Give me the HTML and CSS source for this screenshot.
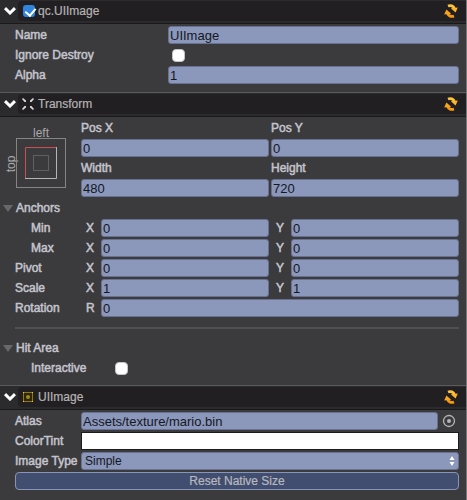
FILE: index.html
```html
<!DOCTYPE html>
<html lang="en">
<head>
<meta charset="utf-8">
<title>Inspector</title>
<link rel="stylesheet" href="styles.css">
</head>
<body>
<svg class="defs" aria-hidden="true">
  <symbol id="chevron" viewBox="0 0 12 8"><path d="M1 1.200L6 6L11 1.200" fill="none" stroke="#fff" stroke-width="3"/></symbol>
  <symbol id="refresh" viewBox="0 0 14 14">
    <path d="M4 2C6.500 1 9.500 1.800 10.600 5" fill="none" stroke="#ffc43a" stroke-width="2.800"/>
    <path d="M6.800 4.300L13.800 3.400L11.600 8.400Z" fill="#ffb52b"/>
    <path d="M10 12C7.500 13 4.500 12.200 3.400 9" fill="none" stroke="#f79a12" stroke-width="2.800"/>
    <path d="M.2 10.600L2.400 5.600L7.200 9.700Z" fill="#fba51c"/>
  </symbol>
</svg>
<main class="panel">
  <section class="component">
    <header class="head">
      <button class="fold" aria-label="Collapse qc.UIImage"><svg width="12" height="8"><use href="#chevron"/></svg></button>
      <div class="bar">
        <input class="tick" type="checkbox" id="enabled" checked>
        <label class="title" for="enabled">qc.UIImage</label>
        <button class="reload" aria-label="Reset qc.UIImage"><svg width="14" height="14"><use href="#refresh"/></svg></button>
      </div>
    </header>
    <div class="rows wide">
      <label for="name">Name</label><input class="field" id="name" value="UIImage">
      <label for="ignore">Ignore Destroy</label><input class="check" type="checkbox" id="ignore">
      <label for="alpha">Alpha</label><input class="field" id="alpha" value="1">
    </div>
  </section>

  <section class="component">
    <header class="head">
      <button class="fold" aria-label="Collapse Transform"><svg width="12" height="8"><use href="#chevron"/></svg></button>
      <div class="bar">
        <svg class="icon" width="14" height="14" viewBox="0 0 14 14" fill="#d8d8d8"><path d="M1 2l1-1 3 2.500V5H3.500zM13 2l-1-1-3 2.500V5h1.500zM1 12l1 1 3-2.500V9H3.500zM13 12l-1 1-3-2.500V9h1.500z"/></svg>
        <h2 class="title">Transform</h2>
        <button class="reload" aria-label="Reset Transform"><svg width="14" height="14"><use href="#refresh"/></svg></button>
      </div>
    </header>
    <div class="rows">
      <svg class="anchor" viewBox="0 0 81 80" width="81" height="80" fill="none">
        <text x="41" y="19" text-anchor="middle">left</text>
        <text x="15" y="46" text-anchor="middle" transform="rotate(-90 15 46)">top</text>
        <rect x="16.500" y="20.500" width="49" height="49" stroke="#858585"/>
        <path d="M25 60.500H56.500V29" stroke="#b4b4b4"/>
        <path d="M25.500 60V29.500H56" stroke="#c94f55"/>
        <rect x="33.500" y="37.500" width="15" height="15" stroke="#606062"/>
      </svg>
      <label for="px">Pos X</label><label for="py">Pos Y</label>
      <input class="field" id="px" value="0"><input class="field" id="py" value="0">
      <label for="w">Width</label><label for="h">Height</label>
      <input class="field" id="w" value="480"><input class="field" id="h" value="720">

      <button class="group">Anchors</button>
      <span class="nested">Min</span>
      <label class="axis">X<input class="field" value="0"></label><label class="axis">Y<input class="field" value="0"></label>
      <span class="nested">Max</span>
      <label class="axis">X<input class="field" value="0"></label><label class="axis">Y<input class="field" value="0"></label>
      <span>Pivot</span>
      <label class="axis">X<input class="field" value="0"></label><label class="axis">Y<input class="field" value="0"></label>
      <span>Scale</span>
      <label class="axis">X<input class="field" value="1"></label><label class="axis">Y<input class="field" value="1"></label>
      <span>Rotation</span>
      <label class="axis span">R<input class="field" value="0"></label>
      <hr>
      <button class="group">Hit Area</button>
      <label class="nested toggle">Interactive<input class="check" type="checkbox"></label>
    </div>
  </section>

  <section class="component">
    <header class="head">
      <button class="fold" aria-label="Collapse UIImage"><svg width="12" height="8"><use href="#chevron"/></svg></button>
      <div class="bar">
        <svg class="icon" width="14" height="14" viewBox="0 0 14 14"><rect x="2.500" y="2.500" width="9" height="9" fill="#2c2710" stroke="#8f790c"/><path d="M2 2h1v1h-1zM11 2h1v1h-1zM2 11h1v1h-1zM11 11h1v1h-1z" fill="#f0d010"/><circle cx="7" cy="7" r="2" fill="#a58b10"/></svg>
        <h2 class="title">UIImage</h2>
        <button class="reload" aria-label="Reset UIImage"><svg width="14" height="14"><use href="#refresh"/></svg></button>
      </div>
    </header>
    <div class="rows">
      <label for="atlas">Atlas</label>
      <div class="asset span">
        <input class="field" id="atlas" value="Assets/texture/mario.bin">
        <button class="pick" aria-label="Choose atlas"><svg width="14" height="14" viewBox="0 0 14 14"><circle cx="7" cy="7" r="5.500" fill="none" stroke="#b5b5b5" stroke-width="1.300"/><circle cx="7" cy="7" r="2" fill="#b5b5b5"/></svg></button>
      </div>
      <span>ColorTint</span><button class="color span" aria-label="ColorTint"></button>
      <label for="type">Image Type</label>
      <div class="choice span">
        <select class="field" id="type"><option>Simple</option></select>
        <svg class="arrows" width="6" height="10" viewBox="0 0 6 10" fill="#fff"><path d="M3 0L5.500 4H.5zM3 10L5.500 6H.5z"/></svg>
      </div>
      <button class="reset">Reset Native Size</button>
    </div>
  </section>
</main>
</body>
</html>
```
FILE: styles.css
```css
* { box-sizing: border-box; }

body {
  margin: 0;
  background: #3b3b3e;
  color: #c4c4cc;
  font: 12px/20px "Liberation Sans", Arial, sans-serif;
}

button, input, select {
  margin: 0;
  padding: 0;
  border: 0;
  background: none;
  color: inherit;
  font: inherit;
}

svg { display: block; }
.defs { position: absolute; width: 0; height: 0; }

.panel {
  min-height: 100vh;
  border-right: 1px solid #77777a;
}

.component { padding-bottom: 7px; }
.component:last-child { padding-bottom: 0; }

.head {
  display: flex;
  height: 25px;
  margin-bottom: 1px;
  padding: 1px 0 2px;
  border-top: 1px solid #5a5a5d;
  border-bottom: 1px solid #19191b;
  background: #2b2b2e;
}

.component:first-child .head {
  height: 24px;
  border-top-color: #2b2b2e;
  padding-top: 0;
}

.fold {
  display: grid;
  place-items: center;
  width: 18px;
  padding-left: 2px;
}

.bar {
  display: flex;
  flex: 1;
  align-items: center;
  padding: 0 8px 0 3px;
  border-radius: 4px 0 0 4px;
  background: #221f22;
}

.icon { margin-right: 3px; }

.tick {
  appearance: none;
  width: 12px;
  height: 12px;
  margin: 0 3px 0 2px;
  border-radius: 3px;
  background: #2f86dc;
}

.tick:checked::after {
  content: "";
  display: block;
  width: 5px;
  height: 8px;
  margin: 1px 0 0 4px;
  border: solid #fff;
  border-width: 0 2px 2px 0;
  transform: rotate(40deg);
}

.title {
  flex: 1;
  margin: 0;
  color: #b4b4b4;
  font-size: 12px;
  font-weight: normal;
  -webkit-text-stroke: 0.2px;
}

.rows {
  display: grid;
  grid-template-columns: 64px 1fr 1fr;
  grid-auto-rows: 20px;
  column-gap: 2px;
  align-items: center;
  padding: 0 7px 0 15px;
}

.rows.wide { grid-template-columns: 151px 1fr; }
.rows label, .rows span, .group { white-space: nowrap; -webkit-text-stroke: 0.5px; }

.rows .field {
  width: 100%;
  min-width: 0;
  height: 18px;
  padding: 1px 1px 0;
  border: 1px solid #68718f;
  border-radius: 3px;
  background: #8b97bb;
  color: #15181f;
  font-size: 13px;
  -webkit-text-stroke: 0;
}

.check {
  appearance: none;
  width: 13px;
  height: 13px;
  margin: 1px 0 0 4px;
  border: 1px solid #c4c4c8;
  border-radius: 4px;
  background: #fff;
}

.anchor {
  grid-row: span 4;
  margin-left: -15px;
  font-size: 12px;
}

.anchor text { fill: #aaa; }
.span { grid-column: span 2; }

.axis {
  display: grid;
  grid-template-columns: 15px 1fr;
  padding-left: 5px;
  align-items: center;
}

.nested { padding-left: 16px; }

.group {
  grid-column: 1 / -1;
  display: flex;
  align-items: center;
  margin-left: -12px;
}

.group::before {
  content: "";
  margin-right: 3px;
  border: solid transparent;
  border-width: 7px 5px 0;
  border-top-color: #68686a;
}

.toggle {
  grid-column: 1 / -1;
  display: grid;
  grid-template-columns: 80px auto;
  justify-content: start;
  align-items: center;
}

hr {
  grid-column: 1 / -1;
  width: 100%;
  height: 2px;
  margin: 0;
  border: 0;
  background: #505052;
}

.asset { display: flex; align-items: center; }
.pick { margin: 0 3px 0 4px; }

.color {
  height: 18px;
  border: 1px solid #1c1c1e;
  background: #fff;
}

.choice { position: relative; display: grid; }
.rows .choice .field { appearance: none; padding: 0 3px; font-size: 12px; line-height: 16px; }
.arrows { position: absolute; top: 4px; right: 4px; pointer-events: none; }

.reset {
  grid-column: 1 / -1;
  height: 18px;
  border: 1px solid #8995b8;
  border-radius: 4px;
  background: #424e70;
  color: #b8b8be;
  line-height: 16px;
  -webkit-text-stroke: 0.2px;
}
```
